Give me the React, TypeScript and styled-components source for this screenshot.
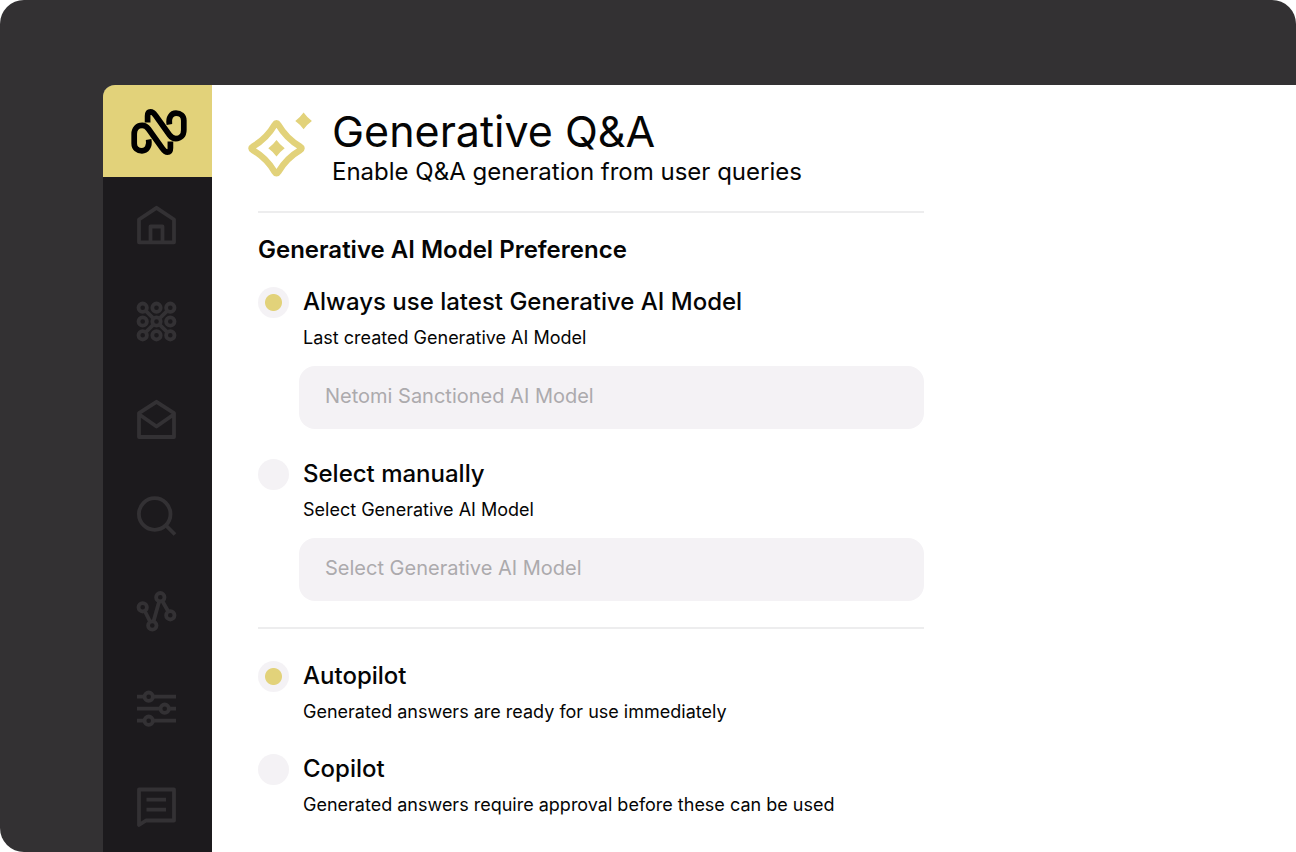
import React from "react";
import styled, { createGlobalStyle } from "styled-components";

const color = {
  frame: "#333133",
  rail: "#1c1a1d",
  icon: "#333134",
  accent: "#e2d27a",
  soft: "#f4f2f5",
  muted: "#acaaad",
  line: "#ededee",
  text: "#050505",
};

const GlobalStyle = createGlobalStyle`
  *, *::before, *::after { box-sizing: border-box; }
  body {
    margin: 0;
    background: #fff;
    color: ${color.text};
    font-family: Inter, "Open Sans", sans-serif;
  }
  h1, h2, p { margin: 0; }
`;

const Frame = styled.div`
  display: flex;
  min-height: 100vh;
  padding: 85px 0 0 103px;
  background: ${color.frame};
  border-radius: 24px 24px 0 24px;
`;

const Window = styled.div`
  display: flex;
  flex: 1;
  min-width: 0;
  overflow: hidden;
  background: #fff;
  border-top-left-radius: 12px;
`;

const Rail = styled.aside`
  flex: 0 0 109px;
  background: ${color.rail};
`;

const Brand = styled.a`
  display: flex;
  align-items: center;
  justify-content: center;
  height: 92px;
  padding: 2px 0 0 2px;
  background: ${color.accent};
  color: #000;
`;

const Nav = styled.nav`
  display: flex;
  flex-direction: column;
  align-items: center;
  gap: 57px;
  padding: 28px 2px 24px 0;
`;

const NavButton = styled.button`
  display: block;
  width: 40px;
  height: 40px;
  padding: 0;
  border: 0;
  background: none;
  color: ${color.icon};
  cursor: pointer;
`;

const Main = styled.main`
  flex: 1;
  min-width: 0;
  max-width: 748px;
  padding: 21px 36px 0;
`;

const Header = styled.header`
  display: flex;
  align-items: flex-start;
  gap: 20px;
  padding-bottom: 23px;
`;

const HeaderIcon = styled.div`
  height: 72px;
  padding-top: 6px;
`;

const Title = styled.h1`
  font-size: 43px;
  line-height: 50px;
  font-weight: 400;
`;

const Subtitle = styled.p`
  font-size: 24px;
  line-height: 32px;
`;

const Settings = styled.form`
  margin-left: 10px;
`;

const Divider = styled.hr`
  height: 2px;
  margin: 0;
  border: 0;
  background: ${color.line};
`;

const Heading = styled.h2`
  padding: 21px 0 20px;
  font-size: 24px;
  line-height: 32px;
  font-weight: 600;
`;

const Options = styled.div<{ $spaced?: boolean }>`
  display: flex;
  flex-direction: column;
  gap: 29px;
  padding-top: ${(p) => (p.$spaced ? 31 : 0)}px;
  padding-bottom: 26px;
`;

const Option = styled.div`
  display: grid;
  grid-template-columns: 31px 1fr;
  column-gap: 14px;
  align-items: center;
`;

const Radio = styled.input`
  appearance: none;
  width: 31px;
  height: 31px;
  margin: 0;
  border-radius: 50%;
  background: ${color.soft};
  cursor: pointer;

  &:checked {
    background: radial-gradient(circle, ${color.accent} 8px, ${color.soft} 9px);
  }
`;

const OptionLabel = styled.label`
  font-size: 24px;
  line-height: 32px;
  font-weight: 500;
  cursor: pointer;
`;

const Description = styled.p`
  grid-column: 2;
  padding-top: 8px;
  font-size: 18px;
  line-height: 24px;
`;

const fieldStyle = `
  grid-column: 1 / -1;
  appearance: none;
  height: 63px;
  margin: 16px 0 0 41px;
  padding: 0 26px 4px;
  border: 0;
  border-radius: 16px;
  background: ${color.soft};
  color: ${color.muted};
  font-family: inherit;
  font-size: 20px;
  line-height: 24px;
`;

const TextField = styled.input`
  ${fieldStyle}

  &::placeholder {
    color: ${color.muted};
    opacity: 1;
  }
`;

const SelectField = styled.select`
  ${fieldStyle}
`;

const ribbon =
  "M17.6 31.5C19 38.5 15.5 42.8 11 42.8C6.5 42.8 3.2 40 3.2 35.5V26C3.2 20.5 6.5 17.4 11.2 17.4C14 17.4 15.8 18.7 17.5 21L31.5 40.5C33 42.8 34.5 44.2 36.5 44.2C38.7 44.2 39.4 42.5 39.4 40V33.5";

const LogoMark = () => (
  <svg width="56" height="48" viewBox="0 0 56 48" fill="none" stroke="currentColor" strokeWidth="5.7" aria-hidden="true">
    <path d={ribbon} />
    <path d={ribbon} transform="rotate(180 28 24)" />
  </svg>
);

const Sparkle = () => (
  <svg width="64" height="66" viewBox="0 0 64 66" fill={color.accent} aria-hidden="true">
    <path
      d="M26.6 12.8Q28.5 9.6 30.4 12.8C35.5 21.5 43.5 29.4 52 34.4Q55.2 36.3 52 38.2C43.5 43.2 35.5 51.1 30.4 59.8Q28.5 63 26.6 59.8C21.5 51.1 13.5 43.2 5 38.2Q1.8 36.3 5 34.4C13.5 29.4 21.5 21.5 26.6 12.8Z"
      fill="none"
      stroke={color.accent}
      strokeWidth="6.4"
      strokeLinejoin="round"
    />
    <path d="M28.5 28Q32 32.8 36.7 36.3Q32 39.8 28.5 44.6Q25 39.8 20.3 36.3Q25 32.8 28.5 28Z" />
    <path d="M55.6 .6Q59 5.4 63.9 8.9Q59 12.4 55.6 17.2Q52.2 12.4 47.3 8.9Q52.2 5.4 55.6 .6Z" />
  </svg>
);

const grid = [5.7, 19.5, 33.3];

const navItems: { label: string; art: React.ReactNode }[] = [
  {
    label: "Home",
    art: <path d="M2 14.5 19.5 2.8 37 14.5V37.3H2ZM13.5 37V21.5H25.5V37" />,
  },
  {
    label: "Workflows",
    art: (
      <>
        {grid.map((x) => grid.map((y) => <circle key={`${x}-${y}`} cx={x} cy={y} r="4.2" />))}
        <path d="M8.8 8.8 16.4 16.4M30.2 8.8 22.6 16.4M8.8 30.2 16.4 22.6M30.2 30.2 22.6 22.6" />
      </>
    ),
  },
  {
    label: "Inbox",
    art: <path d="M2 14.2 19.5 2.8 37 14.2V38H2ZM2 15.2 19.5 27.5 37 15.2" />,
  },
  {
    label: "Search",
    art: (
      <>
        <circle cx="17.7" cy="18" r="15.8" />
        <path d="M28.5 29 38 38.5" />
      </>
    ),
  },
  {
    label: "Analytics",
    art: (
      <>
        <circle cx="5.7" cy="14.3" r="4.2" />
        <circle cx="23.3" cy="4.2" r="4.2" />
        <circle cx="33.3" cy="22.3" r="4.2" />
        <circle cx="15.3" cy="32.5" r="4.2" />
        <path d="M7.8 18 13.2 28.8M16.5 28.5 22.2 8.3M25.3 8 31.3 18.5" />
      </>
    ),
  },
  {
    label: "Controls",
    art: (
      <>
        <path d="M0 6.7H7.5M16 6.7H39M0 18.7H23.5M32 18.7H39M0 30.7H7.5M16 30.7H39" />
        <circle cx="11.7" cy="6.7" r="4.2" />
        <circle cx="27.7" cy="18.7" r="4.2" />
        <circle cx="11.7" cy="30.7" r="4.2" />
      </>
    ),
  },
  {
    label: "Messages",
    art: <path d="M2 2.5H37V33.5H9L2 38ZM9.5 12.7H29M9.5 22.7H29" />,
  },
];

export default function App() {
  return (
    <>
      <GlobalStyle />
      <Frame>
        <Window>
          <Rail>
            <Brand href="#" aria-label="Netomi">
              <LogoMark />
            </Brand>
            <Nav>
              {navItems.map((item) => (
                <NavButton key={item.label} type="button" aria-label={item.label}>
                  <svg
                    width="40"
                    height="40"
                    viewBox="0 0 40 40"
                    fill="none"
                    stroke="currentColor"
                    strokeWidth="3.8"
                    strokeLinejoin="round"
                    overflow="visible"
                    aria-hidden="true"
                  >
                    {item.art}
                  </svg>
                </NavButton>
              ))}
            </Nav>
          </Rail>
          <Main>
            <Header>
              <HeaderIcon>
                <Sparkle />
              </HeaderIcon>
              <div>
                <Title>Generative Q&amp;A</Title>
                <Subtitle>Enable Q&amp;A generation from user queries</Subtitle>
              </div>
            </Header>
            <Settings>
              <Divider />
              <Heading>Generative AI Model Preference</Heading>
              <Options role="radiogroup" aria-label="Generative AI Model Preference">
                <Option>
                  <Radio type="radio" name="model" id="latest" defaultChecked />
                  <OptionLabel htmlFor="latest">Always use latest Generative AI Model</OptionLabel>
                  <Description>Last created Generative AI Model</Description>
                  <TextField type="text" aria-label="Last created Generative AI Model" placeholder="Netomi Sanctioned AI Model" />
                </Option>
                <Option>
                  <Radio type="radio" name="model" id="manual" />
                  <OptionLabel htmlFor="manual">Select manually</OptionLabel>
                  <Description>Select Generative AI Model</Description>
                  <SelectField aria-label="Select Generative AI Model">
                    <option>Select Generative AI Model</option>
                  </SelectField>
                </Option>
              </Options>
              <Divider />
              <Options $spaced role="radiogroup" aria-label="Answer mode">
                <Option>
                  <Radio type="radio" name="mode" id="autopilot" defaultChecked />
                  <OptionLabel htmlFor="autopilot">Autopilot</OptionLabel>
                  <Description>Generated answers are ready for use immediately</Description>
                </Option>
                <Option>
                  <Radio type="radio" name="mode" id="copilot" />
                  <OptionLabel htmlFor="copilot">Copilot</OptionLabel>
                  <Description>Generated answers require approval before these can be used</Description>
                </Option>
              </Options>
            </Settings>
          </Main>
        </Window>
      </Frame>
    </>
  );
}
